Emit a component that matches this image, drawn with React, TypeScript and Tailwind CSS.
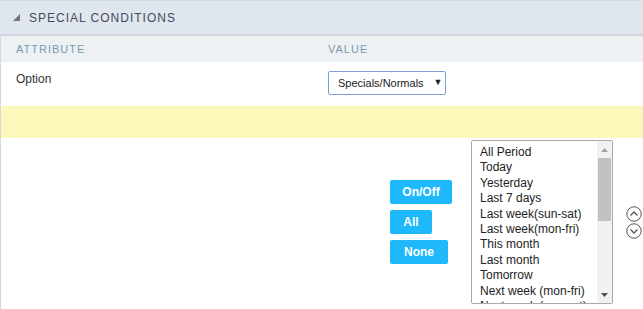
import React from 'react';

const periods = [
  'All Period',
  'Today',
  'Yesterday',
  'Last 7 days',
  'Last week(sun-sat)',
  'Last week(mon-fri)',
  'This month',
  'Last month',
  'Tomorrow',
  'Next week (mon-fri)',
  'Next week (sun-sat)',
  'Next month',
];

const CircleArrow: React.FC<{ dir: 'up' | 'down' }> = ({ dir }) => (
  <svg width="16" height="16" viewBox="0 0 16 16" className="block">
    <circle cx="8" cy="8" r="7.2" fill="none" stroke="#555" strokeWidth="1" />
    {dir === 'up' ? (
      <polyline points="4.5,9.5 8,6 11.5,9.5" fill="none" stroke="#555" strokeWidth="1.3" />
    ) : (
      <polyline points="4.5,6.5 8,10 11.5,6.5" fill="none" stroke="#555" strokeWidth="1.3" />
    )}
  </svg>
);

const App: React.FC = () => {
  return (
    <div className="w-[643px] h-[309px] overflow-hidden bg-white font-['Liberation_Sans',Arial,sans-serif]">
      {/* Section header */}
      <div className="h-[36px] bg-[#dfe6ed] border-t border-[#d4dce3] border-b-2 border-b-[#cdd6dd] flex items-center pl-[13px]">
        <svg width="7" height="7" viewBox="0 0 7 7" className="block">
          <polygon points="7,0 7,7 0,7" fill="#6e7480" />
        </svg>
        <span className="ml-[9px] text-[12px] tracking-[1px] text-[#474b5e] leading-none">SPECIAL CONDITIONS</span>
      </div>

      <div className="border-l border-[#cfdbe3] h-[273px]">
        {/* Column header */}
        <div className="h-[26px] bg-[#edf1f4] grid grid-cols-[327px_1fr] items-center text-[11px] tracking-[1px] text-[#7a98ad]">
          <div className="pl-[15px]">ATTRIBUTE</div>
          <div>VALUE</div>
        </div>

        {/* Option row */}
        <div className="h-[44px] grid grid-cols-[327px_1fr]">
          <div className="pl-[15px] pt-[8px] text-[12px] text-[#333] leading-normal">Option</div>
          <div className="pt-[9px]">
            <div className="w-[118px] h-[24px] border border-[#7d9fd6] rounded-[2px] flex items-center pl-[9px] text-[11px] text-[#222]">
              <span>Specials/Normals</span>
              <span className="ml-[10px] text-[9px]">▼</span>
            </div>
          </div>
        </div>

        {/* Highlight row */}
        <div className="h-[32px] bg-[#fbf8b9]" />

        {/* Period selector */}
        <div className="pt-[2px] pl-[389px] flex items-center">
          <div className="w-[81px] flex flex-col items-start gap-[6px]">
            <button className="w-[62px] h-[24px] rounded-[2px] bg-[#1eb8fb] text-white text-[12px] font-bold">On/Off</button>
            <button className="w-[42px] h-[24px] rounded-[2px] bg-[#1eb8fb] text-white text-[12px] font-bold">All</button>
            <button className="w-[58px] h-[24px] rounded-[2px] bg-[#1eb8fb] text-white text-[12px] font-bold">None</button>
          </div>

          <div className="w-[142px] h-[164px] border border-[#a9a9a9] rounded-[2px] overflow-hidden flex">
            <div className="flex-1 pl-[8px] pt-[4px] text-[12px] text-[#222] leading-[15.4px] overflow-hidden">
              {periods.map((p) => (
                <div key={p} className="whitespace-nowrap">{p}</div>
              ))}
            </div>
            <div className="w-[15px] bg-[#f1f1f1] flex flex-col items-center">
              <div className="h-[17px] flex items-center justify-center">
                <svg width="7" height="4" viewBox="0 0 7 4"><polygon points="3.5,0 7,4 0,4" fill="#a3a3a3" /></svg>
              </div>
              <div className="w-[13px] h-[63px] bg-[#c1c1c1]" />
              <div className="flex-1" />
              <div className="h-[17px] flex items-center justify-center">
                <svg width="7" height="4" viewBox="0 0 7 4"><polygon points="0,0 7,0 3.5,4" fill="#505050" /></svg>
              </div>
            </div>
          </div>

          <div className="ml-[13px] flex flex-col gap-[1px]">
            <CircleArrow dir="up" />
            <CircleArrow dir="down" />
          </div>
        </div>
      </div>
    </div>
  );
};

export default App;
